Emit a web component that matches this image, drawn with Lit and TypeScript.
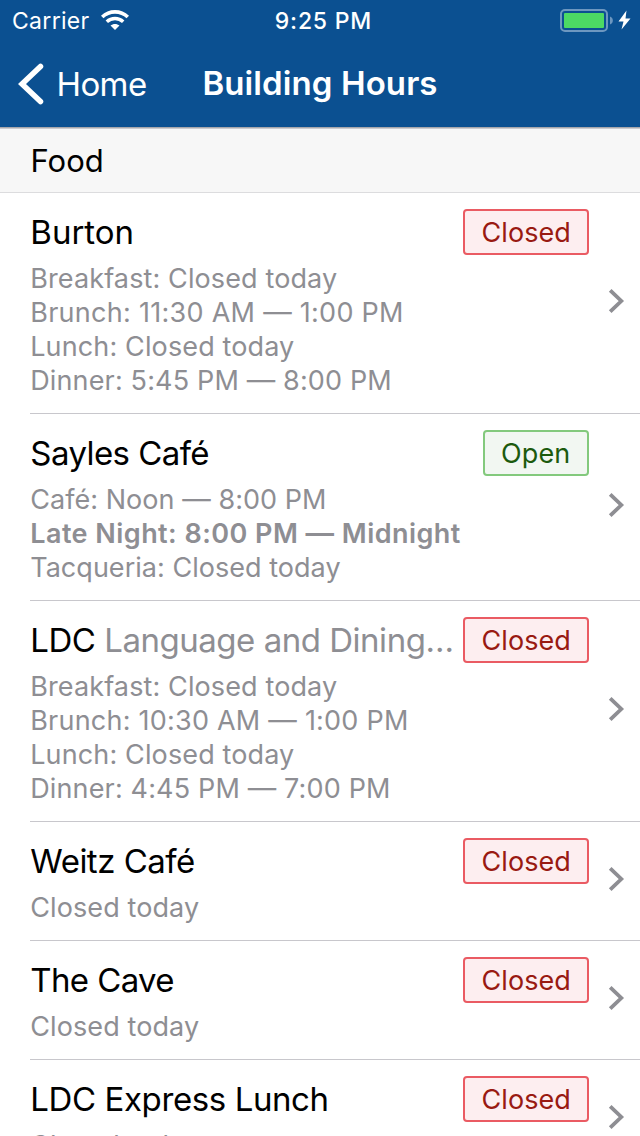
import { LitElement, html, css, nothing } from "lit";
import { customElement, property } from "lit/decorators.js";
import { styleMap } from "lit/directives/style-map.js";

// `tracking` is the letter spacing of a text, in pixels.
interface Line {
  text: string;
  tracking: number;
  current?: boolean;
}

interface Venue {
  name: string;
  tracking: number;
  subtitle?: string;
  open?: boolean;
  lines: Line[];
}

const venues: Venue[] = [
  {
    name: "Burton",
    tracking: 0,
    lines: [
      { text: "Breakfast: Closed today", tracking: 0.12 },
      { text: "Brunch: 11:30 AM — 1:00 PM", tracking: 0.28 },
      { text: "Lunch: Closed today", tracking: 0.13 },
      { text: "Dinner: 5:45 PM — 8:00 PM", tracking: 0.15 },
    ],
  },
  {
    name: "Sayles Café",
    tracking: -0.57,
    open: true,
    lines: [
      { text: "Café: Noon — 8:00 PM", tracking: 0.05 },
      { text: "Late Night: 8:00 PM — Midnight", tracking: 0.46, current: true },
      { text: "Tacqueria: Closed today", tracking: 0.03 },
    ],
  },
  {
    name: "LDC",
    tracking: -0.48,
    subtitle: "Language and Dining…",
    lines: [
      { text: "Breakfast: Closed today", tracking: 0.12 },
      { text: "Brunch: 10:30 AM — 1:00 PM", tracking: 0.23 },
      { text: "Lunch: Closed today", tracking: 0.13 },
      { text: "Dinner: 4:45 PM — 7:00 PM", tracking: 0.15 },
    ],
  },
  { name: "Weitz Café", tracking: -0.5, lines: [{ text: "Closed today", tracking: 0.1 }] },
  { name: "The Cave", tracking: -0.62, lines: [{ text: "Closed today", tracking: 0.1 }] },
  { name: "LDC Express Lunch", tracking: -0.4, lines: [{ text: "Closed today", tracking: 0.1 }] },
];

const spacing = (tracking: number) => styleMap({ letterSpacing: `${tracking}px` });

@customElement("status-bar")
class StatusBar extends LitElement {
  static styles = css`
    :host {
      display: grid;
      grid-template-columns: 1fr auto 1fr;
      align-items: center;
      height: 42px;
      padding: 0 9px 0 12px;
      font-size: 23px;
      line-height: 42px;
    }
    .carrier {
      display: flex;
      align-items: center;
      gap: 11px;
      letter-spacing: 0.3px;
    }
    .time {
      font-weight: 500;
      letter-spacing: 0.8px;
      padding-left: 4px;
    }
    .power {
      display: flex;
      justify-content: flex-end;
    }
    svg {
      display: block;
      margin-bottom: 2px;
    }
  `;

  render() {
    return html`
      <div class="carrier">
        <span>Carrier</span>
        <svg width="28" height="20" viewBox="0 0 28 20" fill="none">
          <path d="M1.200 7C8.300 .1 19.700 .1 26.800 7" stroke="#fff" stroke-width="3.600" />
          <path d="M5.800 11.700C10.400 7.400 17.600 7.400 22.200 11.700" stroke="#fff" stroke-width="3.500" />
          <path d="M9.500 15.600C12.100 13.300 15.900 13.300 18.500 15.600L14 20Z" fill="#fff" />
        </svg>
      </div>
      <div class="time">9:25 PM</div>
      <div class="power">
        <svg width="71" height="24" viewBox="0 0 71 24">
          <rect x="1" y="2" width="46" height="21" rx="4" fill="none" stroke="#6d97c0" stroke-width="2" />
          <rect x="4" y="5" width="40" height="15" rx="1" fill="#4cd964" />
          <path d="M50 8.500c3.800 1.200 3.800 6.800 0 8z" fill="#6d97c0" />
          <path d="M66.500 2.500 58.500 13.500h5L61.500 21.500 70.500 10.500h-5z" fill="#fff" />
        </svg>
      </div>
    `;
  }
}

@customElement("nav-bar")
class NavBar extends LitElement {
  static styles = css`
    :host {
      display: grid;
      grid-template-columns: 1fr auto 1fr;
      align-items: center;
      box-sizing: border-box;
      height: 85px;
      padding: 0 18px 1px;
    }
    .back {
      display: flex;
      align-items: center;
      gap: 12.5px;
      font-size: 33px;
      letter-spacing: -0.6px;
    }
    .title {
      padding-bottom: 2px;
      font-size: 33px;
      font-weight: 600;
      letter-spacing: 0.1px;
    }
    svg {
      display: block;
    }
  `;

  render() {
    return html`
      <div class="back">
        <svg width="26" height="42" viewBox="0 0 26 42" fill="none">
          <path d="M22.500 3.500 4 21l18.500 17.500" stroke="#fff" stroke-width="5.500" stroke-linecap="round" />
        </svg>
        <span>Home</span>
      </div>
      <div class="title">Building Hours</div>
    `;
  }
}

@customElement("venue-row")
class VenueRow extends LitElement {
  @property({ attribute: false }) venue!: Venue;

  static styles = css`
    :host {
      display: flex;
      align-items: center;
      margin-left: 30px;
      padding: 16px 15px 15px 0;
      border-bottom: 1px solid #c8c7cc;
    }
    .body {
      flex: 1;
      min-width: 0;
    }
    .head {
      display: flex;
      align-items: center;
      justify-content: space-between;
      height: 46px;
    }
    .name {
      padding-left: 0.3px;
      white-space: nowrap;
      font-size: 33px;
      line-height: 46px;
      color: #000;
    }
    .subtitle {
      color: #8e8e93;
    }
    .badge {
      box-sizing: border-box;
      height: 46px;
      min-width: 106px;
      padding: 0 16px;
      border: 2px solid #ea5b63;
      border-radius: 4px;
      background: #fdeef0;
      color: #991a12;
      font-size: 27px;
      line-height: 43px;
      letter-spacing: 0.1px;
    }
    .badge.open {
      border-color: #83c97d;
      background: #f2f7f2;
      color: #1c5a0e;
    }
    .lines {
      margin-top: 7px;
      padding-left: 0.2px;
      font-size: 27px;
      line-height: 34px;
      color: #8e8e93;
      white-space: nowrap;
    }
    .line,
    .current {
      height: 34px;
    }
    .current {
      font-weight: 600;
    }
    .dash {
      font-size: 28.5px;
      line-height: 1;
      font-feature-settings: "calt" 0;
    }
    .chevron {
      display: block;
      margin: -5px 0 0 19px;
    }
  `;

  private line(l: Line) {
    const [before, after] = l.text.split("—");
    return html`<div class=${l.current ? "current" : "line"} style=${spacing(l.tracking)}>${before}${after
        ? html`<span class="dash">—</span>${after}`
        : nothing}</div>`;
  }

  render() {
    const { name, tracking, subtitle, open, lines } = this.venue;
    return html`
      <div class="body">
        <div class="head">
          <div class="name" style=${spacing(tracking)}>${name}${subtitle
            ? html` <span class="subtitle">${subtitle}</span>`
            : nothing}</div>
          <div class="badge ${open ? "open" : ""}">${open ? "Open" : "Closed"}</div>
        </div>
        <div class="lines">${lines.map((l) => this.line(l))}</div>
      </div>
      <svg class="chevron" width="17" height="26" viewBox="0 0 17 26" fill="none">
        <path d="M2.200 2.300 13.300 13 2.200 23.700" stroke="#8e8e93" stroke-width="3.800" />
      </svg>
    `;
  }
}

@customElement("app-root")
class AppRoot extends LitElement {
  static styles = css`
    :host {
      display: block;
      height: 1136px;
      overflow: hidden;
      background: #fff;
      font-family: Inter, "Noto Sans", sans-serif;
    }
    .header {
      height: 127px;
      background: #0b5091;
      color: #fff;
    }
    .section {
      box-sizing: border-box;
      height: 66px;
      padding-left: 30.5px;
      border-top: 1px solid #a7a7ac;
      border-bottom: 1px solid #dcdcde;
      box-shadow: inset 0 1px #cbcbcf;
      background: #f7f7f7;
      color: #000;
      font-size: 31px;
      line-height: 66px;
    }
  `;

  render() {
    return html`
      <div class="header">
        <status-bar></status-bar>
        <nav-bar></nav-bar>
      </div>
      <div class="section">Food</div>
      ${venues.map((v) => html`<venue-row .venue=${v}></venue-row>`)}
    `;
  }
}
